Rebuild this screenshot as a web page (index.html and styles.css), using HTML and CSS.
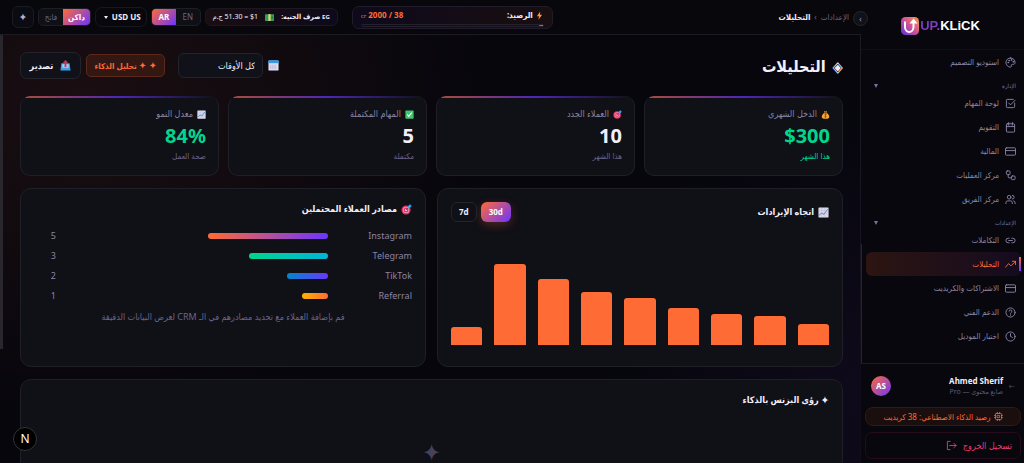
FILE: index.html
```
<!DOCTYPE html>
<html lang="ar" dir="rtl">
<head>
  <meta charset="UTF-8" />
  <meta name="viewport" content="width=device-width, initial-scale=1" />
  <title>UP.KLiCK - التحليلات</title>
  <link rel="stylesheet" href="styles.css">
</head>
<body>

<svg class="sprite" width="0" height="0" aria-hidden="true">
  <defs>
    <linearGradient id="brand" x1="0" y1="1" x2="1" y2="0">
      <stop offset="0" stop-color="#5a2fd8"/><stop offset="0.5" stop-color="#d0509a"/><stop offset="1" stop-color="#ff9a3c"/>
    </linearGradient>
  </defs>
  <symbol id="i-palette" viewBox="0 0 24 24"><path d="M12 2a10 10 0 1 0 0 20c1.700 0 2.400-1.300 1.800-2.600-.9-1.900.2-3.400 2.200-3.400h2.500c2 0 3.500-1.600 3.500-4C22 6.500 17.500 2 12 2z"/><circle cx="7" cy="12" r="1"/><circle cx="9" cy="7.500" r="1"/><circle cx="14" cy="6.500" r="1"/><circle cx="18" cy="10.500" r="1"/></symbol>
  <symbol id="i-check" viewBox="0 0 24 24"><path d="M21 11v8a2 2 0 0 1-2 2H5a2 2 0 0 1-2-2V5a2 2 0 0 1 2-2h13M8 11l4 4L22 5"/></symbol>
  <symbol id="i-calendar" viewBox="0 0 24 24"><rect x="3" y="4" width="18" height="18" rx="2"/><path d="M8 1v6M16 1v6M3 10h18"/></symbol>
  <symbol id="i-card" viewBox="0 0 24 24"><rect x="1" y="4" width="22" height="16" rx="2"/><path d="M1 10h22"/></symbol>
  <symbol id="i-flow" viewBox="0 0 24 24"><rect x="3" y="2" width="8" height="8" rx="2"/><rect x="14" y="13" width="8" height="8" rx="2"/><path d="M7 10v5a2 2 0 0 0 2 2h5"/></symbol>
  <symbol id="i-users" viewBox="0 0 24 24"><circle cx="9" cy="7" r="4"/><path d="M2 21v-2a4 4 0 0 1 4-4h6a4 4 0 0 1 4 4v2M16 3a4 4 0 0 1 0 8M19 15a4 4 0 0 1 3 4v2"/></symbol>
  <symbol id="i-link" viewBox="0 0 24 24"><path d="M9 17H7A5 5 0 0 1 7 7h2M15 7h2a5 5 0 0 1 0 10h-2M8 12h8"/></symbol>
  <symbol id="i-trend" viewBox="0 0 24 24"><path d="M1 18l7-8 5 5L23 5M16 5h7v7"/></symbol>
  <symbol id="i-help" viewBox="0 0 24 24"><circle cx="12" cy="12" r="10"/><path d="M9 9a3 3 0 0 1 6 1c0 2-3 2-3 4M12 17v1"/></symbol>
  <symbol id="i-clock" viewBox="0 0 24 24"><circle cx="12" cy="12" r="10"/><path d="M12 6v6l4 2"/></symbol>
  <symbol id="i-chip" viewBox="0 0 24 24"><rect x="4" y="4" width="16" height="16" rx="2"/><rect x="9" y="9" width="6" height="6"/><path d="M9 1v3M15 1v3M9 20v3M15 20v3M1 9h3M1 15h3M20 9h3M20 15h3"/></symbol>
  <symbol id="i-logout" viewBox="0 0 24 24"><path d="M9 3H3v18h6M8 12h14M17 7l5 5-5 5"/></symbol>
  <symbol id="e-bag" viewBox="0 0 24 24"><path d="M9 2l3 2 3-2 1 5H8z" fill="#d9822b"/><path d="M8 8h8c4 3 6 7 6 10s-2 5-5 5H7c-3 0-5-2-5-5s2-7 6-10z" fill="#f9a825"/><rect x="8" y="6" width="8" height="3" rx="1" fill="#8d4a1b"/><path d="M15 12c-4-2-7 1-3 3s1 5-3 3M12 10v11" fill="none" stroke="#8d4a1b" stroke-width="2"/></symbol>
  <symbol id="e-target" viewBox="0 0 24 24"><circle cx="11" cy="13" r="10" fill="#e0315f"/><circle cx="11" cy="13" r="7" fill="#f08fae"/><circle cx="11" cy="13" r="5" fill="#e0315f"/><circle cx="11" cy="13" r="2" fill="#fff"/><path d="M11 13l7-7" stroke="#7a3b57" stroke-width="2"/><path d="M15 10V5l5-5 1 3 3 1-5 5z" fill="#3ba4f0"/></symbol>
  <symbol id="e-done" viewBox="0 0 24 24"><rect x="1" y="1" width="22" height="22" rx="2" fill="#3fc470"/><path d="M6 12l4 5 8-10" fill="none" stroke="#fff" stroke-width="3"/></symbol>
  <symbol id="e-chart" viewBox="0 0 24 24"><rect x="1" y="1" width="22" height="22" rx="1" fill="#dcd8ea"/><path d="M1 8h22M1 15h22M8 1v22M15 1v22" stroke="#bdb4d2" stroke-width="1"/><path d="M2 19l6-6 5 3 8-11" fill="none" stroke="#3a8fd8" stroke-width="2"/></symbol>
  <symbol id="e-date" viewBox="0 0 24 24"><rect x="1" y="1" width="22" height="22" rx="2" fill="#e2e0f3"/><path d="M1 1h22v6H1z" fill="#2f9bef"/><path d="M5 10v10M9 10v10M13 10v10M17 10v10" stroke="#bab5d8" stroke-width="2"/></symbol>
  <symbol id="e-out" viewBox="0 0 24 24"><path d="M3 7h18l2 16H1z" fill="#3f9fe8"/><path d="M5 9h14v8H5z" fill="#9fcdf5"/><path d="M12 0l6 6h-4v9h-4V6H6z" fill="#d92f57"/></symbol>
  <symbol id="e-cash" viewBox="0 0 24 24"><rect x="0" y="3" width="24" height="18" rx="1" fill="#2e9e4f"/><path d="M9 3h6v18H9z" fill="#e8d27a"/><circle cx="19" cy="12" r="3" fill="#1f7c3b"/></symbol>
  <symbol id="e-bolt" viewBox="0 0 24 24"><path d="M14 1L5 14h6l-2 9 10-13h-6z" fill="#ff9a3c"/></symbol>
</svg>

<div class="app">

  <aside class="sidebar">
    <div class="logo">
      <svg class="logo-mark" viewBox="0 0 36 36" aria-hidden="true">
        <rect width="36" height="36" rx="9" fill="url(#brand)"/>
        <path d="M8 9v11c0 13 17 13 17 0V11" fill="none" stroke="#fff" stroke-width="4"/>
        <path d="M17 13l8-10 8 10z" fill="#fff"/>
      </svg>
      <span class="logo-text" dir="ltr"><span class="logo-up">UP.</span>KLiCK</span>
    </div>

    <nav class="nav">
      <a class="nav-item" href="#"><svg class="icon"><use href="#i-palette"/></svg><span>استوديو التصميم</span></a>
      <div class="nav-label"><span>الإدارة</span><i class="caret"></i></div>
      <a class="nav-item" href="#"><svg class="icon"><use href="#i-check"/></svg><span>لوحة المهام</span></a>
      <a class="nav-item" href="#"><svg class="icon"><use href="#i-calendar"/></svg><span>التقويم</span></a>
      <a class="nav-item" href="#"><svg class="icon"><use href="#i-card"/></svg><span>المالية</span></a>
      <a class="nav-item" href="#"><svg class="icon"><use href="#i-flow"/></svg><span>مركز العمليات</span></a>
      <a class="nav-item" href="#"><svg class="icon"><use href="#i-users"/></svg><span>مركز الفريق</span></a>
      <div class="nav-label"><span>الإعدادات</span><i class="caret"></i></div>
      <a class="nav-item" href="#"><svg class="icon"><use href="#i-link"/></svg><span>التكاملات</span></a>
      <a class="nav-item active" href="#"><svg class="icon"><use href="#i-trend"/></svg><span>التحليلات</span></a>
      <a class="nav-item" href="#"><svg class="icon"><use href="#i-card"/></svg><span>الاشتراكات والكريديت</span></a>
      <a class="nav-item" href="#"><svg class="icon"><use href="#i-help"/></svg><span>الدعم الفني</span></a>
      <a class="nav-item" href="#"><svg class="icon"><use href="#i-clock"/></svg><span>اختبار الموديل</span></a>
    </nav>

    <div class="side-footer">
      <div class="profile">
        <span class="profile-arrow">←</span>
        <div class="profile-info">
          <strong>Ahmed Sherif</strong>
          <small>صانع محتوى — Pro</small>
        </div>
        <span class="avatar">AS</span>
      </div>
      <a class="ai-credit" href="#"><svg class="icon"><use href="#i-chip"/></svg><span>رصيد الذكاء الاصطناعي: 38 كريديت</span></a>
      <button class="logout" type="button"><span>تسجيل الخروج</span><svg class="icon"><use href="#i-logout"/></svg></button>
    </div>
  </aside>

  <div class="main">
    <button class="collapse" type="button" aria-label="طي القائمة">›</button>

    <header class="topbar">
      <div class="crumbs"><a href="#">الإعدادات</a><span>›</span><strong>التحليلات</strong></div>

      <div class="tools">
        <div class="balance">
          <div class="balance-row">
            <span class="balance-name"><svg class="emoji-s"><use href="#e-bolt"/></svg>الرصيد:</span>
            <span class="balance-value">38 / 2000 <small>cr</small></span>
          </div>
          <div class="balance-track"><div class="balance-fill" style="width: 2%"></div></div>
        </div>
        <div class="controls">
          <div class="rate"><b><small>EG</small> صرف الجنيه:</b><svg class="emoji-s"><use href="#e-cash"/></svg><span>$1 = 51.30 ج.م</span></div>
          <div class="toggle"><button type="button">EN</button><button class="on" type="button">AR</button></div>
          <div class="currency" dir="ltr">
            <i class="caret"></i>
            <select aria-label="العملة"><option>USD US</option><option>EGP EG</option></select>
          </div>
          <div class="toggle"><button class="on" type="button">داكن</button><button type="button">فاتح</button></div>
          <button class="star-btn" type="button" aria-label="المساعد">✦</button>
        </div>
      </div>
    </header>

    <main class="content">
      <div class="page-head">
        <h1><span class="gem">◈</span>التحليلات</h1>
        <div class="actions">
          <label class="period">
            <svg class="emoji"><use href="#e-date"/></svg>
            <select aria-label="الفترة"><option>كل الأوقات</option><option>هذا الشهر</option></select>
          </label>
          <button class="ai-btn" type="button"><span class="spark">✦ ✦</span> تحليل الذكاء</button>
          <button class="export-btn" type="button"><svg class="emoji"><use href="#e-out"/></svg>تصدير</button>
        </div>
      </div>

      <div class="stats">
        <div class="stat">
          <div class="stat-name"><svg class="emoji-s"><use href="#e-bag"/></svg>الدخل الشهري</div>
          <div class="stat-value green">$300</div>
          <div class="stat-note green">هذا الشهر</div>
        </div>
        <div class="stat">
          <div class="stat-name"><svg class="emoji-s"><use href="#e-target"/></svg>العملاء الجدد</div>
          <div class="stat-value">10</div>
          <div class="stat-note">هذا الشهر</div>
        </div>
        <div class="stat">
          <div class="stat-name"><svg class="emoji-s"><use href="#e-done"/></svg>المهام المكتملة</div>
          <div class="stat-value">5</div>
          <div class="stat-note">مكتملة</div>
        </div>
        <div class="stat">
          <div class="stat-name"><svg class="emoji-s"><use href="#e-chart"/></svg>معدل النمو</div>
          <div class="stat-value green" dir="ltr">84%</div>
          <div class="stat-note">صحة العمل</div>
        </div>
      </div>

      <div class="panels">
        <section class="panel">
          <div class="panel-head">
            <h2><svg class="emoji"><use href="#e-chart"/></svg>اتجاه الإيرادات</h2>
            <div class="range"><button class="on" type="button">30d</button><button type="button">7d</button></div>
          </div>
          <div class="chart">
            <div class="bar" style="height: 21%"></div>
            <div class="bar" style="height: 29%"></div>
            <div class="bar" style="height: 31%"></div>
            <div class="bar" style="height: 37%"></div>
            <div class="bar" style="height: 47%"></div>
            <div class="bar" style="height: 53%"></div>
            <div class="bar" style="height: 66%"></div>
            <div class="bar" style="height: 81%"></div>
            <div class="bar" style="height: 18%"></div>
          </div>
        </section>

        <section class="panel">
          <h2><svg class="emoji"><use href="#e-target"/></svg>مصادر العملاء المحتملين</h2>
          <div class="sources">
            <div class="source"><span>Instagram</span><div class="track"><div class="fill instagram" style="width: 50%"></div></div><span class="count">5</span></div>
            <div class="source"><span>Telegram</span><div class="track"><div class="fill telegram" style="width: 33%"></div></div><span class="count">3</span></div>
            <div class="source"><span>TikTok</span><div class="track"><div class="fill tiktok" style="width: 17%"></div></div><span class="count">2</span></div>
            <div class="source"><span>Referral</span><div class="track"><div class="fill referral" style="width: 11%"></div></div><span class="count">1</span></div>
          </div>
          <p class="hint">قم بإضافة العملاء مع تحديد مصادرهم في الـ CRM لعرض البيانات الدقيقة</p>
        </section>
      </div>

      <section class="panel insights">
        <h2><span>✦</span>رؤى البزنس بالذكاء</h2>
        <div class="insights-empty">✦</div>
      </section>
    </main>

    <button class="dev-badge" type="button">N</button>
  </div>

</div>

</body>
</html>
```

FILE: styles.css
```
* {
  box-sizing: border-box;
}
body {
  margin: 0;
  font-family: "Noto Sans", "DejaVu Sans Condensed", "DejaVu Sans", sans-serif;
  font-size: 9px;
  line-height: 12px;
  color: #f2effa;
  background: #06060c;
}
a {
  color: inherit;
  text-decoration: none;
}
button, select {
  font: inherit;
  color: inherit;
  margin: 0;
  padding: 0;
  border: none;
  background: none;
  cursor: pointer;
}
select {
  appearance: none;
}
h1, h2, p {
  margin: 0;
}
.sprite {
  position: absolute;
}
.icon {
  width: 11px;
  height: 11px;
  flex: none;
  fill: none;
  stroke: currentColor;
  stroke-width: 2;
  stroke-linecap: round;
  stroke-linejoin: round;
}
.emoji {
  width: 11px;
  height: 11px;
  flex: none;
}
.emoji-s {
  width: 9px;
  height: 9px;
  flex: none;
}
.caret {
  border: 2px solid transparent;
  border-top: 4px solid currentColor;
  border-bottom: none;
}

.app {
  display: flex;
  height: 100vh;
  overflow: hidden;
}

/* sidebar */
.sidebar {
  position: relative;
  width: 163px;
  flex: none;
  display: flex;
  flex-direction: column;
  background: #07070d;
}
.sidebar::before {
  content: "";
  position: absolute;
  left: -1px;
  top: 0;
  bottom: 0;
  width: 1px;
  background: #1b1b24;
}
.sidebar::after {
  content: "";
  position: absolute;
  left: -1px;
  top: 244px;
  bottom: 100px;
  width: 2px;
  background: #24242c;
}
.logo {
  display: flex;
  justify-content: center;
  align-items: center;
  gap: 1px;
  direction: ltr;
  height: 50px;
  flex: none;
  padding: 3px 4px 0 0;
  border-bottom: 1px solid #0f0f18;
}
.logo-mark {
  width: 18px;
  height: 18px;
}
.logo-text {
  font-family: "Liberation Sans", sans-serif;
  font-size: 13px;
  line-height: 16px;
  font-weight: bold;
  color: #fff;
}
.logo-up {
  background: linear-gradient(160deg, #5a35e0, #a04a9a);
  background-clip: text;
  color: transparent;
}
.nav {
  flex: 1;
  min-height: 0;
  overflow: hidden;
  padding: 0 3px 0 5px;
}
.nav-item {
  position: relative;
  display: flex;
  align-items: center;
  gap: 6px;
  height: 24px;
  padding-right: 5px;
  font-size: 8px;
  color: #8d88a8;
  border-radius: 6px;
}
.nav-item.active {
  color: #ff6b35;
  background: linear-gradient(90deg, #2c1511, #150b20);
}
.nav-item.active::before {
  content: "";
  position: absolute;
  right: 0;
  top: 5px;
  width: 2px;
  height: 14px;
  background: linear-gradient(#ff6b35, #6c35ff);
}
.nav-label {
  display: flex;
  justify-content: space-between;
  align-items: center;
  height: 17px;
  padding: 6px 5px 0 8px;
  font-size: 6px;
  line-height: 10px;
  color: #7a729c;
}
.side-footer {
  flex: none;
  height: 100px;
  padding: 10px 3px 4px 4px;
  border-top: 1px solid #1b1b24;
  display: flex;
  flex-direction: column;
}
.profile {
  display: flex;
  align-items: center;
  height: 24px;
  margin-bottom: 9px;
  padding: 0 6px;
}
.profile-arrow {
  width: 9px;
  margin-left: 3px;
  font-size: 8px;
  color: #4c4763;
}
.profile-info {
  flex: 1;
  display: flex;
  flex-direction: column;
}
.profile-info strong {
  font-size: 8px;
}
.profile-info small {
  font-size: 7px;
  line-height: 10px;
  color: #5f5a7a;
}
.avatar {
  width: 20px;
  height: 20px;
  border-radius: 50%;
  background: linear-gradient(135deg, #ff6b35, #6c35ff);
  color: #fff;
  font-size: 8px;
  line-height: 20px;
  font-weight: bold;
  text-align: center;
}
.ai-credit {
  display: flex;
  justify-content: center;
  align-items: center;
  gap: 3px;
  height: 20px;
  margin-bottom: 6px;
  border: 1px solid #35190f;
  border-radius: 8px;
  background: #1b0e0f;
  color: #ff6b35;
  font-size: 8px;
}
.ai-credit .icon {
  width: 9px;
  height: 9px;
}
.logout {
  display: flex;
  justify-content: flex-start;
  align-items: center;
  gap: 6px;
  height: 27px;
  padding: 0 8px;
  border: 1px solid #260c1b;
  border-radius: 7px;
  color: #f0396b;
}

/* main column */
.main {
  position: relative;
  flex: 1;
  min-width: 0;
  display: flex;
  flex-direction: column;
  background:
    radial-gradient(ellipse 420px 330px at 10% 22%, #1a0e12, transparent),
    radial-gradient(ellipse 260px 300px at 100% 85%, #0f0a1b, transparent);
}
.main::after {
  content: "";
  position: absolute;
  left: 0;
  top: 35px;
  width: 3px;
  height: 314px;
  background: #29272d;
}
.collapse {
  position: absolute;
  z-index: 2;
  top: 11px;
  right: -7px;
  width: 15px;
  height: 15px;
  border: 1px solid #262631;
  border-radius: 50%;
  background: #111119;
  color: #a59fc0;
  font-size: 8px;
  line-height: 10px;
}
.topbar {
  flex: none;
  display: flex;
  justify-content: space-between;
  align-items: center;
  height: 35px;
  padding: 0 12px;
  background: #07070c;
  border-bottom: 1px solid #1b1b21;
}
.crumbs {
  display: flex;
  gap: 4px;
  font-size: 8px;
  color: #6b6588;
}
.crumbs strong {
  color: #f2effa;
}
.tools {
  display: flex;
  align-items: center;
  gap: 14px;
}
.balance {
  width: 201px;
  height: 23px;
  padding: 2px 8px;
  border: 1px solid #221b2b;
  border-radius: 7px;
  background: linear-gradient(90deg, #0e0a1d, #190e10);
}
.balance-row {
  display: flex;
  justify-content: space-between;
  font-size: 8px;
  font-weight: bold;
}
.balance-name {
  display: flex;
  align-items: center;
  gap: 2px;
}
.balance-value {
  color: #ff6b35;
}
.balance-value small {
  font-size: 6px;
  font-weight: normal;
}
.balance-track {
  height: 3px;
  margin-top: 2px;
  border: 1px solid #24212c;
  border-radius: 2px;
}
.balance-fill {
  height: 1px;
  background: linear-gradient(90deg, #6c35ff, #ff6b35);
}
.controls {
  display: flex;
  align-items: center;
  gap: 4px;
}
.rate {
  display: flex;
  align-items: center;
  justify-content: space-between;
  width: 133px;
  height: 18px;
  padding: 0 7px;
  border: 1px solid #1d1722;
  border-radius: 6px;
  background: linear-gradient(90deg, #190e11, #0e0a1c);
  font-size: 7px;
  white-space: nowrap;
}
.rate small {
  font-size: 6px;
}
.toggle {
  display: flex;
  height: 18px;
  border: 1px solid #1d1d26;
  border-radius: 5px;
  background: #0f0f16;
  overflow: hidden;
}
.toggle button {
  min-width: 24px;
  padding: 0 5px;
  font-size: 8px;
  color: #6b6588;
}
.toggle .on {
  color: #fff;
  font-weight: bold;
  background: linear-gradient(135deg, #ff6b35, #6c35ff);
}
.currency {
  display: flex;
  align-items: center;
  gap: 4px;
  width: 52px;
  height: 20px;
  padding: 0 6px 0 8px;
  border: 1px solid #17171f;
  border-radius: 7px;
  font-size: 8px;
  font-weight: bold;
}
.currency .caret {
  border-top-width: 3px;
}
.star-btn {
  width: 22px;
  height: 22px;
  border: 1px solid #1b1b24;
  border-radius: 6px;
  background: #0b0b12;
  color: #b5b0cc;
  font-size: 11px;
}
.content {
  flex: 1;
  min-height: 0;
  overflow: hidden;
  padding: 17px 18px 0 20px;
}
.page-head {
  display: flex;
  justify-content: space-between;
  align-items: center;
  height: 27px;
  margin-bottom: 17px;
}
h1 {
  display: flex;
  align-items: center;
  gap: 7px;
  font-size: 16px;
  line-height: 24px;
}
.gem {
  font-size: 15px;
}
.actions {
  display: flex;
  align-items: center;
  gap: 5px;
}
.period {
  display: flex;
  align-items: center;
  gap: 5px;
  margin-left: 8px;
}
.period select {
  width: 85px;
  height: 25px;
  padding: 0 7px;
  border: 1px solid #23232c;
  border-radius: 6px;
  background: #111119;
}
.ai-btn {
  width: 79px;
  height: 23px;
  border: 1px solid #5b2819;
  border-radius: 5px;
  background: #321713;
  color: #ff6b35;
  font-weight: bold;
  font-size: 8px;
  white-space: nowrap;
}
.spark {
  font-size: 10px;
}
.export-btn {
  display: flex;
  align-items: center;
  justify-content: center;
  gap: 7px;
  width: 61px;
  height: 27px;
  border: 1px solid #23232c;
  border-radius: 7px;
  background: #111119;
  font-weight: bold;
}

/* stat cards */
.stats {
  display: grid;
  grid-template-columns: repeat(4, 1fr);
  gap: 9px;
  margin-bottom: 12px;
}
.stat {
  position: relative;
  height: 80px;
  padding: 12px 12px 0;
  border: 1px solid #1f1f27;
  border-top: none;
  border-radius: 10px;
  background: #101017;
  overflow: hidden;
}
.stat::before {
  content: "";
  position: absolute;
  left: 0;
  right: 0;
  top: 0;
  height: 2px;
  background: linear-gradient(90deg, #b04c33, #4c27b5 50%, transparent);
}
.stat-name {
  display: flex;
  align-items: center;
  gap: 4px;
  color: #8a85a3;
}
.stat-value {
  margin-top: 2px;
  font-size: 20px;
  line-height: 28px;
  font-weight: bold;
  text-align: right;
}
.stat-note {
  font-size: 8px;
  color: #6b6588;
}
.green {
  color: #00d68f;
}

/* panels */
.panels {
  display: grid;
  grid-template-columns: 1fr 1fr;
  gap: 11px;
  margin-bottom: 12px;
}
.panel {
  height: 179px;
  padding: 12px 13px;
  border: 1px solid #1f1f27;
  border-radius: 11px;
  background: #101017;
}
h2 {
  display: flex;
  align-items: center;
  gap: 4px;
  font-size: 9px;
  line-height: 16px;
}
.panel-head {
  display: flex;
  justify-content: space-between;
  align-items: center;
  height: 22px;
  margin-bottom: 22px;
}
.range {
  display: flex;
  gap: 4px;
}
.range button {
  height: 20px;
  padding: 0 7px;
  border: 1px solid #23232c;
  border-radius: 6px;
  font-size: 8px;
  font-weight: bold;
}
.range .on {
  border: none;
  padding: 0 8px;
  color: #fff;
  background: linear-gradient(135deg, #ff6b35, #6c35ff);
  box-shadow: 0 3px 10px rgba(255, 107, 53, 0.25);
}
.chart {
  display: grid;
  grid-template-columns: repeat(9, 1fr);
  gap: 12px;
  align-items: end;
  height: 100px;
}
.bar {
  background: #ff6b35;
  border-radius: 3px 3px 0 0;
}
.sources {
  margin-top: 9px;
}
.source {
  display: flex;
  align-items: center;
  height: 20px;
  color: #8a85a3;
}
.source > span:first-child {
  width: 84px;
}
.track {
  flex: 1;
  margin-left: 32px;
}
.fill {
  height: 6px;
  border-radius: 3px;
}
.instagram {
  background: linear-gradient(90deg, #ff6b35, #6c35ff);
}
.telegram {
  background: linear-gradient(90deg, #00d68f, #00b4d8);
}
.tiktok {
  background: linear-gradient(90deg, #0088cc, #6c35ff);
}
.referral {
  background: linear-gradient(90deg, #ffb300, #ff6b35);
}
.source .count {
  width: 22px;
}
.hint {
  margin-top: 5px;
  text-align: center;
  color: #6b6588;
}
.insights {
  height: 200px;
}
.insights h2 {
  gap: 2px;
}
.insights h2 span {
  font-size: 11px;
}
.insights-empty {
  margin-top: 34px;
  text-align: center;
  font-size: 24px;
  line-height: 20px;
  color: #474259;
}
.dev-badge {
  position: absolute;
  left: 13px;
  bottom: 12px;
  width: 24px;
  height: 24px;
  border: 1px solid #33333a;
  border-radius: 50%;
  background: #000;
  color: #fff;
  font-size: 12px;
  line-height: 20px;
}
```
